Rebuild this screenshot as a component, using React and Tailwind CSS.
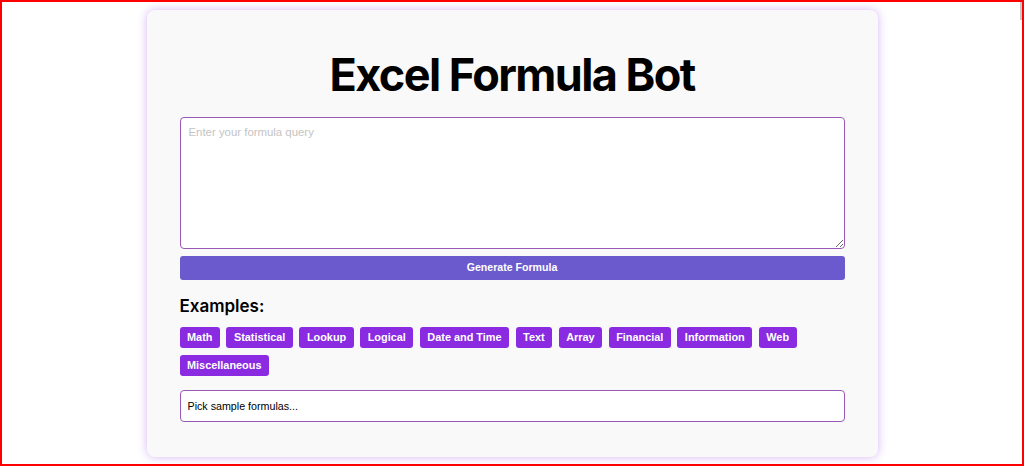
import React, { useState } from "react";

const categories = [
  "Math",
  "Statistical",
  "Lookup",
  "Logical",
  "Date and Time",
  "Text",
  "Array",
  "Financial",
  "Information",
  "Web",
  "Miscellaneous",
];

const App = () => {
  const [query, setQuery] = useState("");
  const [picked, setPicked] = useState("");

  return (
    <div className="relative h-[466px] overflow-hidden border-2 border-[#f00] bg-white">
      {/* scrollbar thumb */}
      <div className="absolute right-0 top-0 h-[18px] w-[2px] bg-[#c8c8c8]" />

      <div className="mx-auto mt-[8px] w-[731px] rounded-lg bg-[#f9f9fa] px-[33px] pt-[42px] pb-[35px] shadow-[0_0_10px_rgba(138,43,226,0.35)]">
        {/* Header */}
        <h1 className="mb-[19px] text-center font-['Inter',sans-serif] text-[45px] leading-[46px] font-bold tracking-[-0.035em] text-black">
          Excel Formula Bot
        </h1>

        {/* Query */}
        <textarea
          value={query}
          onChange={(e) => setQuery(e.target.value)}
          placeholder="Enter your formula query"
          className="block h-[132px] w-full rounded-[4px] border border-[#9b59b6] bg-white px-[8px] pt-[6px] pb-[8px] font-['Liberation_Sans',Arial,sans-serif] text-[11.4px] outline-none placeholder:text-[#c4c4c4]"
        />

        <button className="mt-[7px] block h-[24px] w-full rounded-[3px] bg-[#6a5acd] font-['Liberation_Sans',Arial,sans-serif] text-[10.6px] font-bold text-white">
          Generate Formula
        </button>

        {/* Examples */}
        <h2 className="mt-[14px] font-['Inter',sans-serif] text-[17px] leading-[24px] font-semibold text-black">
          Examples:
        </h2>
        <div className="mt-[9px] flex flex-wrap gap-x-[6.5px] gap-y-[7px]">
          {categories.map((c) => (
            <button
              key={c}
              onClick={() => setPicked(c)}
              className="h-[21px] rounded-[3px] bg-[#8a2be2] px-[7.5px] font-['Liberation_Sans',Arial,sans-serif] text-[10.9px] leading-[21px] font-bold text-white"
            >
              {c}
            </button>
          ))}
        </div>

        <div className="mt-[14px] flex h-[32px] items-center rounded-[4px] border border-[#9b59b6] bg-white px-[7px] font-['Liberation_Sans',Arial,sans-serif] text-[10.7px] text-black">
          {picked ? `${picked} formulas...` : "Pick sample formulas..."}
        </div>
      </div>
    </div>
  );
};

export default App;
